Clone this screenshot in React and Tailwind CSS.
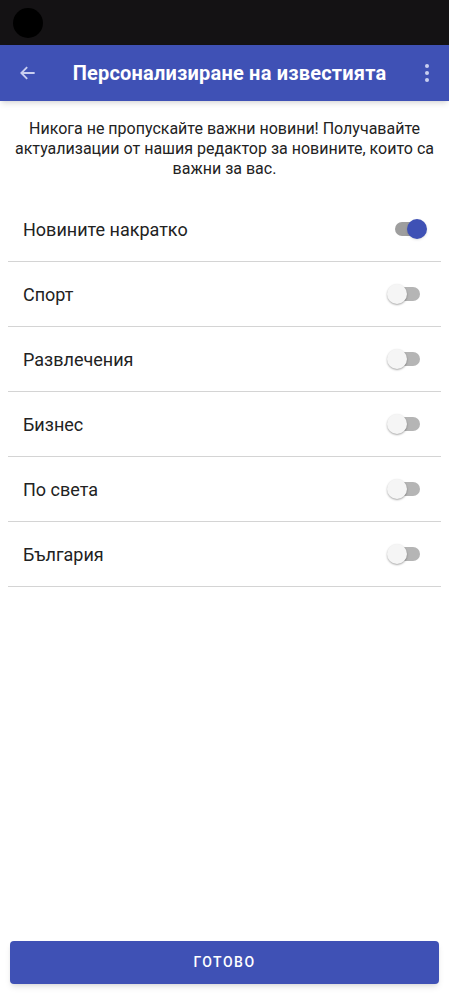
export default function App() {
  const items = [
    ["Новините накратко", true],
    ["Спорт", false],
    ["Развлечения", false],
    ["Бизнес", false],
    ["По света", false],
    ["България", false],
  ];
  return (
    <div className="w-[449px] h-[1000px] bg-white flex flex-col" style={{ fontFamily: "Roboto, 'Noto Sans', sans-serif" }}>
      <div className="h-[45px] bg-[#141214] flex items-center pl-[13px]">
        <div className="w-[30px] h-[30px] rounded-full bg-black" />
      </div>
      <div className="h-[56px] bg-[#3f51b5] flex items-center relative shadow-md">
        <div className="w-[56px] flex justify-center">
          <svg width="20" height="20" viewBox="0 0 24 24" fill="none" stroke="#c9cff0" strokeWidth="2.2">
            <path d="M20 12H5M11 5l-7 7 7 7" />
          </svg>
        </div>
        <div className="flex-1 text-center text-white text-[20px] font-bold tracking-[0.2px] pr-[2px]">Персонализиране на известията</div>
        <div className="w-[44px] flex justify-center">
          <svg width="6" height="20" viewBox="0 0 6 20" fill="#c9cff0">
            <circle cx="3" cy="3" r="2" />
            <circle cx="3" cy="10" r="2" />
            <circle cx="3" cy="17" r="2" />
          </svg>
        </div>
      </div>
      <div className="pt-[18px] px-[12px] text-center text-[16px] leading-[20px] text-[#222]">
        Никога не пропускайте важни новини! Получавайте актуализации от нашия редактор за новините, които са важни за вас.
      </div>
      <div className="mt-[18px] mx-[8px] flex flex-col">
        {items.map(([label, on]) => (
          <div key={label} className="h-[65px] flex items-center justify-between border-b border-[#d4d4d4] pl-[15px] pr-[14px]">
            <span className="text-[18px] text-[#222]">{label}</span>
            <div className="relative w-[40px] h-[20px] flex items-center">
              <div className={"w-[25px] h-[14px] rounded-full mx-auto " + (on ? "bg-[#9e9e9e]" : "bg-[#b5b5b5]")} />
              {on ? (
                <div className="absolute right-0 top-0 w-[20px] h-[20px] rounded-full bg-[#3f51b5] shadow" />
              ) : (
                <div className="absolute left-0 top-0 w-[20px] h-[20px] rounded-full bg-[#f5f5f5] shadow-[0_1px_2px_rgba(0,0,0,0.35)]" />
              )}
            </div>
          </div>
        ))}
      </div>
      <div className="flex-1" />
      <div className="px-[10px] pb-[16px]">
        <div className="h-[43px] rounded-[4px] bg-[#3f51b5] shadow-md flex items-center justify-center text-white text-[14px] font-medium tracking-[1.5px]">ГОТОВО</div>
      </div>
    </div>
  );
}
